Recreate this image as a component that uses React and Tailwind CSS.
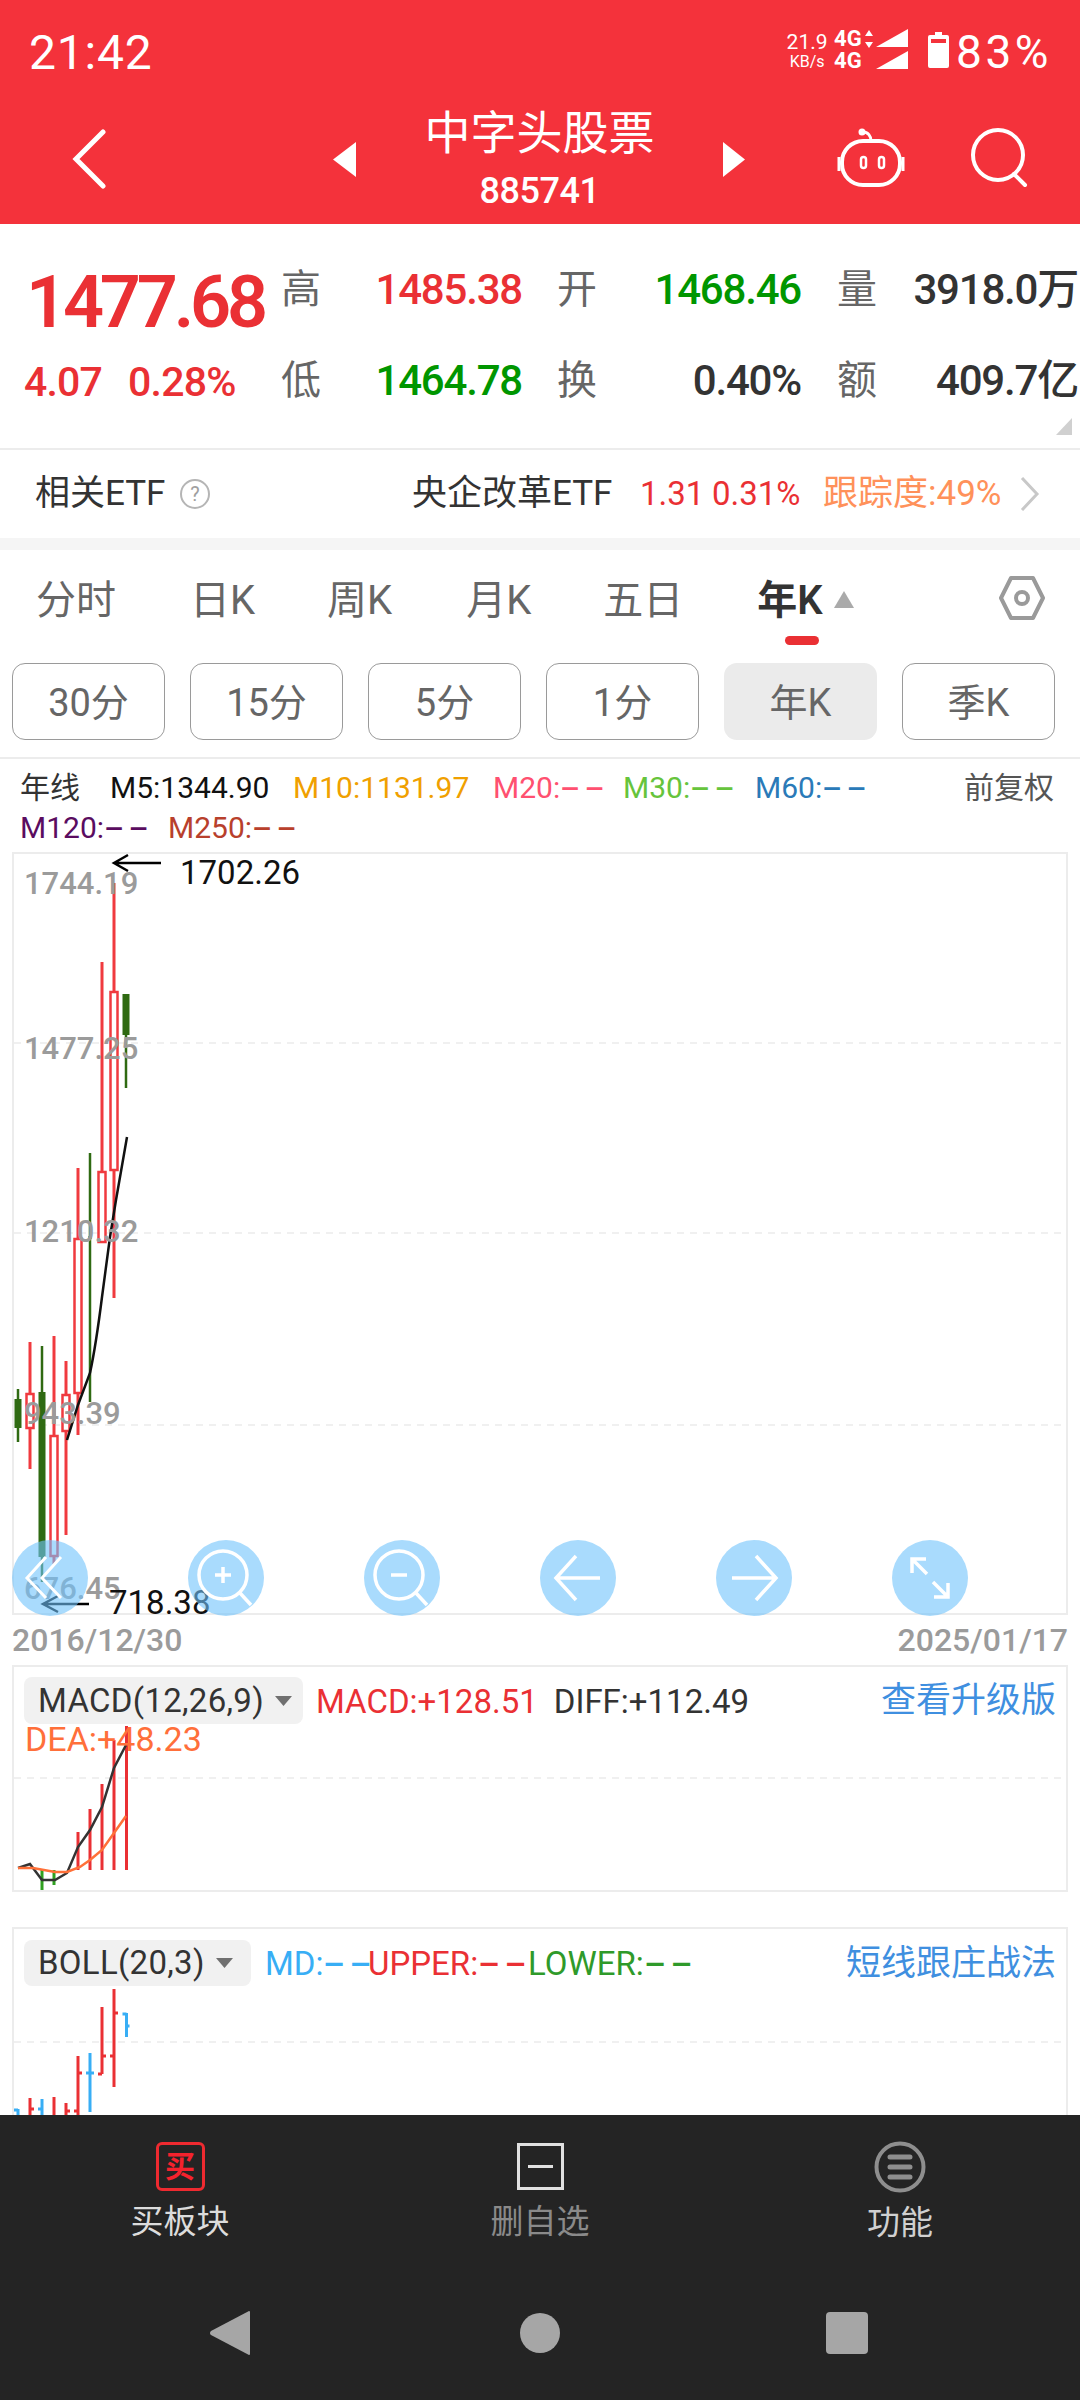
import React from "react";

const Cell = ({ label, value, color, w, pr }) => (
  <div className={`flex items-center h-[50px] ${w}`}>
    <span className="w-[41px] text-[40px] leading-[50px] text-[#666666]">{label}</span>
    <span className={`flex-1 text-right text-[42px] leading-[50px] font-medium tracking-[-1.2px] ${pr} ${color}`}>{value}</span>
  </div>
);

const Dash = () => <span className="inline-block w-[44px] origin-left scale-x-[2] tracking-[2px] font-medium">--</span>;

const Candle = ({ x, top, bodyTop, bodyBottom, bottom, up, w = 7 }) => {
  const c = up ? "#f03a3f" : "#2f6a12";
  return (
    <g>
      <line x1={x} x2={x} y1={top} y2={bottom} stroke={c} strokeWidth={up ? 3 : 2.5} />
      {up ? (
        <rect x={x - 3.5} y={bodyTop} width={7} height={bodyBottom - bodyTop} fill="#ffffff" stroke={c} strokeWidth={2.5} />
      ) : (
        <rect x={x - w / 2} y={bodyTop} width={w} height={bodyBottom - bodyTop} fill={c} />
      )}
    </g>
  );
};

const FloatBtn = ({ cx, children }) => (
  <div className="absolute top-[686px] w-[76px] h-[76px] rounded-full bg-[#70c3fc]/60 flex items-center justify-center" style={{ left: cx - 52 }}>
    <svg width="76" height="76" viewBox="0 0 76 76" fill="none" stroke="#ffffff" strokeWidth="3.5">{children}</svg>
  </div>
);

const PriceLabel = ({ cls, children }) => (
  <span className={`absolute text-[31px] leading-[36px] text-[#9b9b9b] font-medium ${cls}`}>{children}</span>
);

const PERIODS = ["30分", "15分", "5分", "1分", "年K", "季K"];

export default function App() {
  return (
    <div className="w-[1080px] h-[2400px] flex flex-col overflow-hidden bg-white font-[Roboto,'Noto_Sans_CJK_SC',sans-serif]">
      {/* header */}
      <header className="h-[224px] shrink-0 bg-[#f4323b] text-white">
        <div className="h-[100px] flex items-start pl-[29px] pr-[28px] pt-[27px]">
          <span className="text-[48px] leading-[52px] tracking-[0.8px]">21:42</span>
          <div className="ml-auto flex items-start">
            <div className="flex flex-col items-center w-[42px] mt-[4px]">
              <span className="text-[21px] leading-[22px]">21.9</span>
              <span className="text-[16px] leading-[18px]">KB/s</span>
            </div>
            <div className="flex flex-col w-[42px] ml-[6px] mt-[1px] text-[22px] leading-[22px] font-bold">
              <div className="flex items-center">
                4G
                <svg width="10" height="18" viewBox="0 0 10 18" className="ml-[2px]" fill="#fff">
                  <path d="M5 0l4 6H1zM5 18l-4-6h8z" />
                </svg>
              </div>
              <span>4G</span>
            </div>
            <svg width="33" height="42" viewBox="0 0 33 42" fill="#fff" className="mt-[2px]">
              <path d="M0 18L32 0v18zM0 40L32 22v18z" />
            </svg>
            <svg width="21" height="36" viewBox="0 0 21 36" className="ml-[19px] mt-[5px]" fill="#fff">
              <path d="M7 0h7v3h5a2 2 0 012 2v29a2 2 0 01-2 2H2a2 2 0 01-2-2V5a2 2 0 012-2h5z" />
              <rect x="3" y="7" width="15" height="4" fill="#f4323b" />
            </svg>
            <span className="ml-[7px] text-[46px] leading-[50px] tracking-[3.500px]">83%</span>
          </div>
        </div>
        <div className="h-[118px] flex items-center pl-[72px]">
          <svg width="34" height="60" viewBox="0 0 34 60" fill="none" stroke="#fff" strokeWidth="5" strokeLinecap="round">
            <path d="M31 3L4 30l27 27" />
          </svg>
          <svg width="23" height="35" viewBox="0 0 23 35" fill="#fff" className="ml-[227px]">
            <path d="M23 0v35L0 17.5z" />
          </svg>
          <div className="w-[367px] flex flex-col items-center">
            <span className="text-[46px] leading-[50px]">中字头股票</span>
            <span className="mt-[13px] text-[36px] leading-[40px] font-medium tracking-[-0.5px]">885741</span>
          </div>
          <svg width="22" height="35" viewBox="0 0 22 35" fill="#fff">
            <path d="M0 0v35l22-17.5z" />
          </svg>
          <svg width="70" height="60" viewBox="0 0 70 60" fill="none" stroke="#fff" strokeWidth="4" className="ml-[91px] -mt-[4px]">
            <rect x="6" y="14" width="58" height="44" rx="21" />
            <path d="M3 30v14M67 30v14" strokeWidth="3" />
            <path d="M27 5c5 0 8 4 8 9" strokeWidth="3" />
            <circle cx="26" cy="5" r="3.500" fill="#fff" stroke="none" />
            <rect x="25" y="30" width="5" height="11" rx="2.500" strokeWidth="2.500" />
            <rect x="43" y="30" width="5" height="11" rx="2.500" strokeWidth="2.500" />
          </svg>
          <svg width="60" height="60" viewBox="0 0 60 60" fill="none" stroke="#fff" strokeWidth="4" className="ml-[64px] -mt-[2px]">
            <circle cx="28" cy="27" r="25" />
            <path d="M44 46l11 11" strokeLinecap="round" />
          </svg>
        </div>
      </header>

      {/* quote */}
      <section className="relative h-[226px] shrink-0 flex border-b-2 border-[#ececec]">
        <div className="w-[281px] shrink-0 pl-[26px]">
          <div className="mt-[43px] text-[72px] leading-[72px] font-semibold tracking-[-4.2px] text-[#ea3034]">1477.68</div>
          <div className="mt-[21px] -ml-[2px] flex text-[41px] leading-[44px] font-medium tracking-[-0.8px] text-[#ea3034]">
            <span>4.07</span>
            <span className="ml-[26px]">0.28%</span>
          </div>
        </div>
        <div className="flex-1 pt-[41px]">
          <div className="flex">
            <Cell label="高" value="1485.38" color="text-[#ea3034]" w="w-[276px]" pr="pr-[35px]" />
            <Cell label="开" value="1468.46" color="text-[#009600]" w="w-[280px]" pr="pr-[36px]" />
            <Cell label="量" value="3918.0万" color="text-[#333333]" w="w-[243px]" pr="pr-[2px]" />
          </div>
          <div className="flex mt-[41px]">
            <Cell label="低" value="1464.78" color="text-[#009600]" w="w-[276px]" pr="pr-[35px]" />
            <Cell label="换" value="0.40%" color="text-[#333333]" w="w-[280px]" pr="pr-[36px]" />
            <Cell label="额" value="409.7亿" color="text-[#333333]" w="w-[243px]" pr="pr-[2px]" />
          </div>
        </div>
        <svg width="16" height="17" viewBox="0 0 16 17" fill="#d0d0d0" className="absolute left-[1056px] top-[194px]">
          <path d="M16 0v17H0z" />
        </svg>
      </section>

      {/* ETF row */}
      <section className="h-[88px] shrink-0 flex items-center pl-[35px] text-[35px] leading-[40px] text-[#333333] whitespace-nowrap">
        <span className="w-[145px]">相关ETF</span>
        <span className="w-[30px] h-[30px] rounded-full border-2 border-[#b5b5b5] flex items-center justify-center text-[20px] leading-none text-[#a0a0a0]">?</span>
        <span className="ml-[202px] w-[228px]">央企改革ETF</span>
        <span className="w-[72px] text-[33px] text-[#ea3034]">1.31</span>
        <span className="w-[111px] text-[33px] text-[#ea3034]">0.31%</span>
        <span className="w-[197px] text-[#ff915a]">跟踪度:49%</span>
        <svg width="20" height="34" viewBox="0 0 20 34" fill="none" stroke="#c8c8c8" strokeWidth="3">
          <path d="M2 1l15 16L2 33" />
        </svg>
      </section>
      <div className="h-[12px] shrink-0 bg-[#f5f5f5]" />

      {/* tabs */}
      <nav className="relative h-[98px] mb-[15px] pt-[4px] shrink-0 flex items-center text-[40px] leading-[44px] text-[#666666]">
        <span className="ml-[36px]">分时</span>
        <span className="ml-[74px]">日K</span>
        <span className="ml-[72px]">周K</span>
        <span className="ml-[74px]">月K</span>
        <span className="ml-[72px]">五日</span>
        <span className="relative ml-[74px] font-semibold text-[#333333]">
          年K
          <span className="absolute left-[28px] top-[57px] w-[34px] h-[9px] rounded-full bg-[#ea3034]" />
        </span>
        <svg width="20" height="17" viewBox="0 0 20 17" fill="#aaaaaa" className="ml-[11px] -mt-[4px]">
          <path d="M10 0l10 17H0z" />
        </svg>
        <svg width="46" height="46" viewBox="0 0 46 46" fill="none" stroke="#9a9a9a" strokeWidth="4" className="ml-[145px] -mt-[6px]">
          <path d="M12 3h22l10 20-10 20H12L2 23z" strokeLinejoin="round" />
          <circle cx="23" cy="23" r="6" />
        </svg>
      </nav>

      {/* period buttons */}
      <div className="h-[77px] shrink-0 flex gap-[25px] pl-[12px]">
        {PERIODS.map((p, i) => (
          <div
            key={p}
            className={`w-[153px] h-[77px] pt-[2px] rounded-[13px] flex items-center justify-center text-[38px] leading-none text-[#666666] ${
              i === 4 ? "bg-[#ebebeb]" : "border border-[#9a9a9a]"
            }`}
          >
            {p}
          </div>
        ))}
      </div>

      {/* legend */}
      <div className="mt-[17px] h-[95px] shrink-0 border-t-2 border-[#ececec] px-[20px] pt-[9px] text-[30px] leading-[40px]">
        <div className="flex whitespace-nowrap">
          <span className="text-[#333333] w-[90px]">年线</span>
          <span className="text-[#111111] w-[183px]">M5:1344.90</span>
          <span className="text-[#f0a000] w-[200px]">M10:1131.97</span>
          <span className="text-[#ff5070] w-[130px]">M20:<Dash /></span>
          <span className="text-[#66c43c] w-[132px]">M30:<Dash /></span>
          <span className="text-[#2a7ab8] w-[209px]">M60:<Dash /></span>
          <span className="text-[#555555]">前复权</span>
        </div>
        <div className="flex whitespace-nowrap">
          <span className="text-[#5a0c60] w-[148px]">M120:<Dash /></span>
          <span className="text-[#b8402c]">M250:<Dash /></span>
        </div>
      </div>

      {/* main chart */}
      <div className="relative mx-[12px] h-[763px] w-[1056px] shrink-0 border-2 border-[#ececec]">
        <svg className="absolute -left-[2px] -top-[2px]" width="1056" height="763" viewBox="12 852 1056 763" fill="none">
          <path d="M14 1043H1068M14 1233H1068M14 1425H1068" stroke="#ececec" strokeWidth="1.5" strokeDasharray="7 6" />
          <Candle x={18} top={1389} bodyTop={1399} bodyBottom={1428} bottom={1442} />
          <Candle x={30} top={1342} bodyTop={1394} bodyBottom={1428} bottom={1469} up />
          <Candle x={42} top={1346} bodyTop={1392} bodyBottom={1557} bottom={1582} />
          <Candle x={54} top={1336} bodyTop={1436} bodyBottom={1556} bottom={1564} up />
          <Candle x={66} top={1361} bodyTop={1395} bodyBottom={1431} bottom={1535} up />
          <Candle x={78} top={1168} bodyTop={1239} bodyBottom={1393} bottom={1435} up />
          <Candle x={90} top={1153} bodyTop={1236} bodyBottom={1239} bottom={1402} w={3} />
          <Candle x={102} top={962} bodyTop={1172} bodyBottom={1242} bottom={1242} up />
          <Candle x={114} top={883} bodyTop={992} bodyBottom={1170} bottom={1298} up />
          <Candle x={126} top={994} bodyTop={994} bodyBottom={1035} bottom={1088} />
          <path d="M67 1440L78 1405 90 1373C96 1345 102 1297 102 1297L110 1237 116 1200 127 1137" stroke="#111111" strokeWidth="2.500" />
          <path d="M161 863H115M128 855L114 863 128 871" stroke="#000000" strokeWidth="2.500" />
          <path d="M89 1604H43M58 1596L43 1604 58 1612" stroke="#000000" strokeWidth="2.500" />
        </svg>
        <PriceLabel cls="left-[10px] top-[12px]">1744.19</PriceLabel>
        <PriceLabel cls="left-[10px] top-[177px]">1477.25</PriceLabel>
        <PriceLabel cls="left-[10px] top-[360px]">1210.32</PriceLabel>
        <PriceLabel cls="left-[10px] top-[542px]">943.39</PriceLabel>
        <PriceLabel cls="left-[10px] top-[717px]">676.45</PriceLabel>
        <span className="absolute left-[166px] top-[1px] text-[33px] leading-[36px] text-[#111111]">1702.26</span>
        <span className="absolute left-[95px] top-[731px] text-[33px] leading-[36px] text-[#111111]">718.38</span>
        <FloatBtn cx={50}>
          <path d="M34 17L15 38l19 20M49 17L30 38l19 20" strokeWidth="3" />
        </FloatBtn>
        <FloatBtn cx={226}>
          <circle cx="35" cy="35" r="24" />
          <path d="M35 27v16M27 35h16" />
          <path d="M52 53l11 12" />
        </FloatBtn>
        <FloatBtn cx={402}>
          <circle cx="35" cy="35" r="24" />
          <path d="M27 35h16" />
          <path d="M52 53l11 12" />
        </FloatBtn>
        <FloatBtn cx={578}>
          <path d="M60 38H16M36 16L16 38l20 22" />
        </FloatBtn>
        <FloatBtn cx={754}>
          <path d="M16 38h44M40 16l20 22-20 22" />
        </FloatBtn>
        <FloatBtn cx={930}>
          <path d="M20 33V19h14M20 19l15 15M56 43v14H42M56 57L41 42" />
        </FloatBtn>
      </div>

      {/* dates */}
      <div className="h-[50px] w-[1056px] mx-[12px] shrink-0 flex items-center justify-between text-[32px] leading-[36px] text-[#9b9b9b] font-medium">
        <span>2016/12/30</span>
        <span>2025/01/17</span>
      </div>

      {/* MACD */}
      <div className="relative mx-[12px] h-[227px] w-[1056px] shrink-0 border-2 border-[#ececec]">
        <svg className="absolute -left-[2px] -top-[2px]" width="1056" height="227" viewBox="12 1665 1056 227" fill="none">
          <path d="M14 1778H1068" stroke="#ececec" strokeWidth="1.5" strokeDasharray="7 6" />
          <path d="M78 1870V1832M90 1870V1809M102 1870V1784M114 1870V1740M126.500 1870V1726" stroke="#ea3034" strokeWidth="3" />
          <path d="M42 1870V1890M54 1870V1885" stroke="#2fa020" strokeWidth="3" />
          <path d="M18 1868L30 1864 42 1880 55 1880 67 1873 78 1847 90 1830 102 1807 114 1768 126 1745" stroke="#333333" strokeWidth="2.500" />
          <path d="M18 1868L33 1868 55 1872 67 1872 80 1867 90 1860 102 1850 114 1833 126 1816" stroke="#ff7038" strokeWidth="2.500" />
        </svg>
        <div className="relative flex items-center pl-[10px] pt-[9px] text-[33px] leading-[47px] whitespace-nowrap">
          <div className="w-[279px] h-[47px] rounded-[8px] bg-[#f1f1f1] pl-[14px] flex items-center text-[#333333] tracking-[0.3px]">
            MACD(12,26,9)
            <svg width="17" height="10" viewBox="0 0 17 10" fill="#707070" className="ml-[11px]">
              <path d="M0 0h17L8.500 10z" />
            </svg>
          </div>
          <span className="ml-[13px] pt-[2px] text-[#ea3034]">MACD:+128.51</span>
          <span className="ml-[16px] pt-[2px] text-[#333333]">DIFF:+112.49</span>
          <span className="ml-auto mr-[10px] text-[#3f8fe0] text-[35px]">查看升级版</span>
        </div>
        <span className="absolute left-[11px] top-[52px] text-[34px] leading-[40px] text-[#ff6f3a]">DEA:+48.23</span>
      </div>

      {/* BOLL */}
      <div className="relative mt-[35px] mx-[12px] flex-1 w-[1056px] border-2 border-b-0 border-[#ececec] overflow-hidden">
        <svg className="absolute -left-[2px] -top-[2px]" width="1056" height="190" viewBox="12 1927 1056 190" fill="none">
          <path d="M14 2042H1068" stroke="#ececec" strokeWidth="1.5" strokeDasharray="7 6" />
          <path d="M114 1989V2087M114 2013h4M114 2056h-4M102 2007V2074M102 2056h4M102 2074h-4M78 2056V2117M78 2073h4M78 2111h-4M66 2103V2117M66 2111h4M54 2097V2117M30 2098V2117M30 2109h4" stroke="#ea3034" strokeWidth="3" />
          <path d="M126.500 2013V2037M126.500 2014h-4M126.500 2026h3M90 2053V2112M90 2073h4M90 2073h-4M42 2099V2117M42 2109h-4M18 2109V2117M18 2110h-4" stroke="#38aef5" strokeWidth="3" />
        </svg>
        <div className="relative flex items-center pl-[10px] pt-[10px] text-[33px] leading-[46px] whitespace-nowrap">
          <div className="w-[227px] h-[46px] rounded-[8px] bg-[#f1f1f1] pl-[14px] flex items-center text-[#333333] tracking-[0.3px]">
            BOLL(20,3)
            <svg width="17" height="10" viewBox="0 0 17 10" fill="#707070" className="ml-[11px]">
              <path d="M0 0h17L8.500 10z" />
            </svg>
          </div>
          <span className="ml-[14px] w-[103px] pt-[2px] text-[#38aef5]">MD:<Dash /></span>
          <span className="w-[160px] pt-[2px] text-[#ea3034]">UPPER:<Dash /></span>
          <span className="w-[170px] pt-[2px] text-[#2f9a2a]">LOWER:<Dash /></span>
          <span className="ml-auto mr-[10px] pt-[2px] text-[#3f8fe0] text-[35px]">短线跟庄战法</span>
        </div>
      </div>

      {/* bottom */}
      <footer className="h-[285px] shrink-0 bg-[#242424]">
        <div className="h-[143px] flex">
          <div className="w-[360px] flex flex-col items-center pt-[27px]">
            <div className="w-[49px] h-[49px] rounded-[6px] border-[3px] border-[#ee2a30] flex items-center justify-center text-[30px] leading-none font-bold text-[#f5222d]">买</div>
            <span className="mt-[11px] text-[33px] leading-[40px] text-[#dcdcdc]">买板块</span>
          </div>
          <div className="w-[360px] flex flex-col items-center pt-[28px]">
            <div className="w-[47px] h-[47px] border-[3px] border-[#e0e0e0] flex items-center justify-center">
              <div className="w-[25px] h-[3px] bg-[#e0e0e0]" />
            </div>
            <span className="mt-[12px] text-[33px] leading-[40px] text-[#8a8a8a]">删自选</span>
          </div>
          <div className="w-[360px] flex flex-col items-center pt-[26px]">
            <svg width="52" height="52" viewBox="0 0 52 52" fill="none" stroke="#8e8e8e">
              <circle cx="26" cy="26" r="23.500" strokeWidth="4" />
              <path d="M16 16h20M16 26h20M16 36h20" strokeWidth="5" strokeLinecap="round" />
            </svg>
            <span className="mt-[10px] text-[33px] leading-[40px] text-[#d0d0d0]">功能</span>
          </div>
        </div>
        <div className="mt-[52px] flex items-center pl-[210px]">
          <svg width="40" height="46" viewBox="0 0 40 46" fill="#a6a6a6">
            <path d="M39 1a1 1 0 011 1v42a1 1 0 01-1 1L1 25a2.500 2.500 0 010-4z" />
          </svg>
          <div className="ml-[270px] w-[40px] h-[40px] rounded-full bg-[#a6a6a6]" />
          <div className="ml-[266px] w-[42px] h-[42px] rounded-[4px] bg-[#a6a6a6]" />
        </div>
      </footer>
    </div>
  );
}
